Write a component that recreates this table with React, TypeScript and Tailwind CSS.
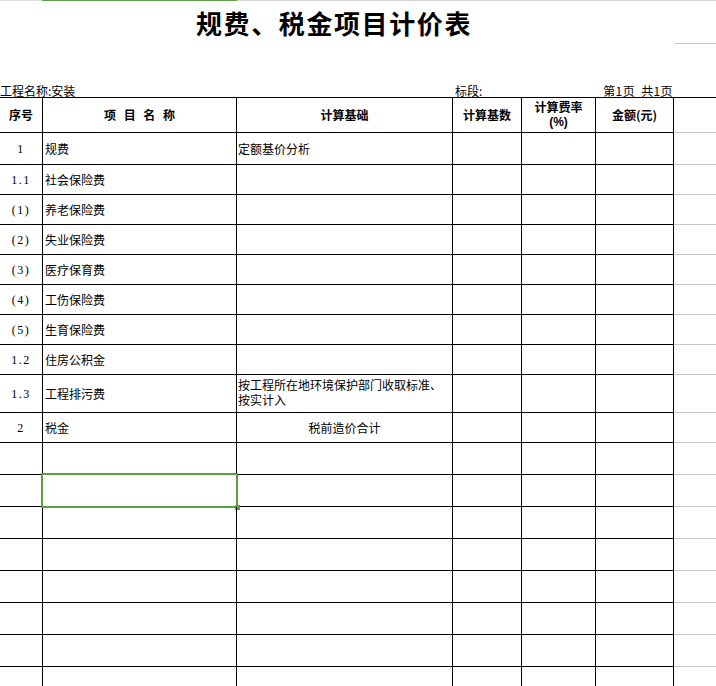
import React from "react";

type Row = {
  h: number;
  seq?: string;
  name?: string;
  basis?: string[];
  basisCenter?: boolean;
  selected?: boolean;
};

const hClass: Record<number, string> = {
  30: "h-[30px]",
  32: "h-[32px]",
  35: "h-[35px]",
  38: "h-[38px]",
};

const rows: Row[] = [
  { h: 32, seq: "1", name: "规费", basis: ["定额基价分析"] },
  { h: 30, seq: "1.1", name: "社会保险费" },
  { h: 30, seq: "(1)", name: "养老保险费" },
  { h: 30, seq: "(2)", name: "失业保险费" },
  { h: 30, seq: "(3)", name: "医疗保育费" },
  { h: 30, seq: "(4)", name: "工伤保险费" },
  { h: 30, seq: "(5)", name: "生育保险费" },
  { h: 30, seq: "1.2", name: "住房公积金" },
  {
    h: 38,
    seq: "1.3",
    name: "工程排污费",
    basis: ["按工程所在地环境保护部门收取标准、", "按实计入"],
  },
  { h: 30, seq: "2", name: "税金", basis: ["税前造价合计"], basisCenter: true },
  { h: 32 },
  { h: 32, selected: true },
  { h: 32 },
  { h: 32 },
  { h: 32 },
  { h: 32 },
  { h: 32 },
  { h: 32 },
];

const grid = "grid grid-cols-[43px_194px_216px_69px_74px_78px_42px]";
const cell = "border-r border-b border-black";
const cjk = "font-['Noto_Sans_CJK_SC','Noto_Sans',sans-serif]";
const tight = "font-['Liberation_Sans','Noto_Sans_CJK_SC',sans-serif]";

export default function App() {
  return (
    <div className={`w-[716px] h-[686px] overflow-hidden bg-white text-black ${cjk}`}>
      {/* top sheet edge */}
      <div className="flex h-px">
        <div className="w-[42px] bg-[#dcdcdc]" />
        <div className="w-[195px] bg-[#5f9f45]" />
        <div className="flex-1 bg-[#d4d4d4]" />
      </div>
      {/* title row */}
      <div className="flex h-[43px]">
        <div className="w-[674px] flex items-center justify-center pr-[6px] pt-[1px]">
          <span className="text-[26px] font-bold leading-none tracking-[1.6px]">
            规费、税金项目计价表
          </span>
        </div>
        <div className="flex-1 border-b border-[#c8c8c8]" />
      </div>
      {/* info row */}
      <div className="flex w-[674px] h-[53px] items-end text-[12px] leading-[13px]">
        <div className="w-[455px]">工程名称:安装</div>
        <div>标段:</div>
        <div className="ml-auto pr-[1px] tracking-[0.4px] [word-spacing:3px]">第1页 共1页</div>
      </div>

      {/* header */}
      <div className={`${grid} border-t border-black h-[36px]`}>
        <div className={`${cell} flex items-center justify-center text-[12px] font-bold`}>序号</div>
        <div className={`${cell} flex items-center justify-center text-[12px] font-bold [word-spacing:5px]`}>
          项 目 名 称
        </div>
        <div className={`${cell} flex items-center justify-center text-[12px] font-bold`}>计算基础</div>
        <div className={`${cell} flex items-center justify-center text-[12px] font-bold`}>计算基数</div>
        <div className={`${cell} flex flex-col items-center justify-center text-[12px] font-bold ${tight}`}>
          <div className="h-[14px] leading-[14px]">计算费率</div>
          <div className="h-[14px] leading-[14px]">(%)</div>
        </div>
        <div className={`${cell} flex items-center justify-center text-[12px] font-bold`}>金额(元)</div>
        <div className="border-b border-[#c8c8c8]" />
      </div>

      {rows.map((r, i) => (
        <div key={i} className={`${grid} ${hClass[r.h]}`}>
          <div
            className={`${cell} flex items-center justify-center text-[12px] font-['Liberation_Serif',serif] tracking-[1.5px]`}
          >
            {r.seq}
          </div>
          <div className={`${cell} relative flex items-center pl-[2px] text-[12px]`}>
            {r.name}
            {r.selected && (
              <>
                <div className="absolute -left-[2px] -top-[2px] -right-[2px] -bottom-[2px] border-2 border-[#5c9e40]" />
                <div className="absolute -right-[4px] -bottom-[4px] w-[5px] h-[5px] bg-[#5c9e40]" />
              </>
            )}
          </div>
          <div
            className={`${cell} flex flex-col justify-center text-[12px] ${
              r.basis && r.basis.length > 1 ? tight : ""
            } ${r.basisCenter ? "items-center" : "items-start pl-[1px]"}`}
          >
            {r.basis?.map((line, j) => (
              <div key={j} className="h-[15px] leading-[15px] whitespace-nowrap">
                {line}
              </div>
            ))}
          </div>
          <div className={cell} />
          <div className={cell} />
          <div className={cell} />
          <div className="border-b border-[#c8c8c8]" />
        </div>
      ))}
    </div>
  );
}
